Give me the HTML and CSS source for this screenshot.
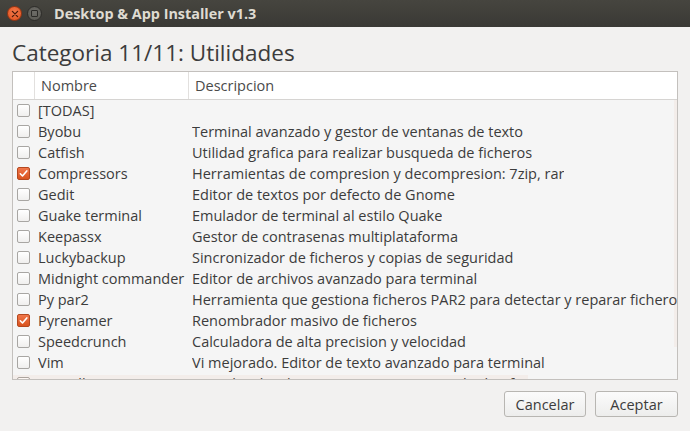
FILE: index.html
```html
<!DOCTYPE html>
<html>
<head>
<meta charset="utf-8">
<link rel="stylesheet" href="styles.css">
</head>
<body>
<div class="window">
  <div class="titlebar">
    <span class="wbtn close"><svg width="8" height="8" viewBox="0 0 8 8"><path d="M1.4 1.4L6.6 6.6M6.6 1.4L1.4 6.6" stroke="#4a1a0a" stroke-width="1.3" stroke-linecap="round"/></svg></span>
    <span class="wbtn max"><span class="sq"></span></span>
    <span class="title">Desktop &amp; App Installer v1.3</span>
  </div>
  <div class="content">
    <h1 class="heading">Categoria 11/11: Utilidades</h1>
    <div class="tree">
      <div class="thead">
        <div class="hc c0"></div>
        <div class="hc c1">Nombre</div>
        <div class="hc c2">Descripcion</div>
      </div>
      <div class="tbody">
        <div class="row"><span class="cb"></span><span class="name">[TODAS]</span><span class="desc"></span></div>
        <div class="row"><span class="cb"></span><span class="name">Byobu</span><span class="desc">Terminal avanzado y gestor de ventanas de texto</span></div>
        <div class="row"><span class="cb"></span><span class="name">Catfish</span><span class="desc">Utilidad grafica para realizar busqueda de ficheros</span></div>
        <div class="row"><span class="cb on"><svg width="13" height="13" viewBox="0 0 13 13"><path d="M3.3 6.8L5.5 9L9.8 3.9" fill="none" stroke="#fff" stroke-width="1.6" stroke-linecap="round" stroke-linejoin="round"/></svg></span><span class="name">Compressors</span><span class="desc">Herramientas de compresion y decompresion: 7zip, rar</span></div>
        <div class="row"><span class="cb"></span><span class="name">Gedit</span><span class="desc">Editor de textos por defecto de Gnome</span></div>
        <div class="row"><span class="cb"></span><span class="name">Guake terminal</span><span class="desc">Emulador de terminal al estilo Quake</span></div>
        <div class="row"><span class="cb"></span><span class="name">Keepassx</span><span class="desc">Gestor de contrasenas multiplataforma</span></div>
        <div class="row"><span class="cb"></span><span class="name">Luckybackup</span><span class="desc">Sincronizador de ficheros y copias de seguridad</span></div>
        <div class="row"><span class="cb"></span><span class="name">Midnight commander</span><span class="desc">Editor de archivos avanzado para terminal</span></div>
        <div class="row"><span class="cb"></span><span class="name">Py par2</span><span class="desc">Herramienta que gestiona ficheros PAR2 para detectar y reparar ficheros</span></div>
        <div class="row"><span class="cb on"><svg width="13" height="13" viewBox="0 0 13 13"><path d="M3.3 6.8L5.5 9L9.8 3.9" fill="none" stroke="#fff" stroke-width="1.6" stroke-linecap="round" stroke-linejoin="round"/></svg></span><span class="name">Pyrenamer</span><span class="desc">Renombrador masivo de ficheros</span></div>
        <div class="row"><span class="cb"></span><span class="name">Speedcrunch</span><span class="desc">Calculadora de alta precision y velocidad</span></div>
        <div class="row"><span class="cb"></span><span class="name">Vim</span><span class="desc">Vi mejorado. Editor de texto avanzado para terminal</span></div>
        <div class="row"><span class="cb"></span><span class="name">Virtualbox</span><span class="desc">Virtualizador de sistemas operativos multiplataforma</span></div>
      </div>
      <div class="vscroll"></div>
      <div class="hscroll"></div>
    </div>
    <div class="actions">
      <button class="btn">Cancelar</button>
      <button class="btn">Aceptar</button>
    </div>
  </div>
</div>
</body>
</html>
```
FILE: styles.css
```css
html, body {
  margin: 0;
  padding: 0;
}
body {
  width: 690px;
  height: 431px;
  overflow: hidden;
  background: #f2f1f0;
  font-family: "Open Sans", "Noto Sans", sans-serif;
  color: #3c3c3c;
}
.window {
  display: flex;
  flex-direction: column;
  height: 431px;
}
.titlebar {
  height: 27px;
  flex: none;
  background: linear-gradient(#46453f, #3a3935);
  display: flex;
  align-items: center;
  padding-left: 7px;
  box-sizing: border-box;
}
.wbtn {
  width: 15px;
  height: 15px;
  border-radius: 50%;
  display: flex;
  align-items: center;
  justify-content: center;
  margin-right: 5px;
  box-sizing: border-box;
}
.wbtn.close {
  background: radial-gradient(circle at 50% 40%, #f47a4c, #e1501c);
  border: 1px solid #9a3512;
}
.wbtn.max {
  background: radial-gradient(circle at 50% 40%, #6e6d68, #56554f);
  border: 1px solid #2e2d2a;
}
.wbtn .sq {
  width: 7px;
  height: 7px;
  border: 1px solid #2b2a27;
  border-radius: 1px;
  box-sizing: border-box;
}
.title {
  margin-left: 7px;
  font-family: "Open Sans", sans-serif;
  font-weight: 700;
  font-size: 14.4px;
  color: #dfdbd2;
}
.content {
  flex: 1;
  display: flex;
  flex-direction: column;
  padding: 0 12px 0 12px;
}
.heading {
  margin: 8px 0 0 0;
  font-weight: 400;
  font-size: 22.5px;
  line-height: 36px;
  height: 36px;
  color: #3c3c3c;
}
.tree {
  position: relative;
  height: 309px;
  border: 1px solid #c3c0bd;
  box-sizing: border-box;
  background: #f5f5f5;
  overflow: hidden;
  font-size: 14.5px;
}
.thead {
  height: 28px;
  display: flex;
  background: #ffffff;
  border-bottom: 1px solid #d6d4d2;
  box-sizing: border-box;
}
.hc {
  display: flex;
  align-items: center;
  box-sizing: border-box;
  color: #4a4a4a;
}
.c0 {
  width: 22px;
  border-right: 1px solid #e2e0de;
}
.c1 {
  width: 154px;
  padding-left: 6px;
  border-right: 1px solid #e2e0de;
}
.c2 {
  flex: 1;
  padding-left: 6px;
}
.row {
  height: 21px;
  display: flex;
  align-items: center;
  white-space: nowrap;
}
.cb {
  width: 13px;
  height: 13px;
  margin-left: 4px;
  margin-right: 8px;
  border: 1px solid #a8a6a3;
  border-radius: 2px;
  background: linear-gradient(#ffffff, #f0efee);
  box-sizing: border-box;
  flex: none;
  position: relative;
}
.cb.on {
  border-color: #b4481f;
  background: linear-gradient(#f0764a, #d9531e);
}
.cb svg {
  position: absolute;
  left: -1px;
  top: -1px;
}
.name {
  width: 154px;
  flex: none;
  color: #3c3c3c;
  overflow: hidden;
}
.desc {
  color: #3c3c3c;
  overflow: hidden;
}
.vscroll {
  position: absolute;
  right: 0;
  top: 28px;
  width: 3px;
  height: 247px;
  background: rgba(233, 140, 100, 0.07);
}
.hscroll {
  position: absolute;
  left: 0;
  bottom: 0;
  width: 515px;
  height: 4px;
  background: rgba(233, 140, 100, 0.07);
}
.actions {
  display: flex;
  justify-content: flex-end;
  gap: 9px;
  margin-top: 11px;
}
.btn {
  height: 26px;
  font-family: "Open Sans", "Noto Sans", sans-serif;
  font-size: 14.5px;
  color: #3c3c3c;
  border: 1px solid #b8b6b2;
  border-radius: 3px;
  background: linear-gradient(#fbfbfb, #ededec);
  padding: 0;
  box-sizing: border-box;
}
.btn:first-child {
  width: 82px;
}
.btn:last-child {
  width: 83px;
}
```
